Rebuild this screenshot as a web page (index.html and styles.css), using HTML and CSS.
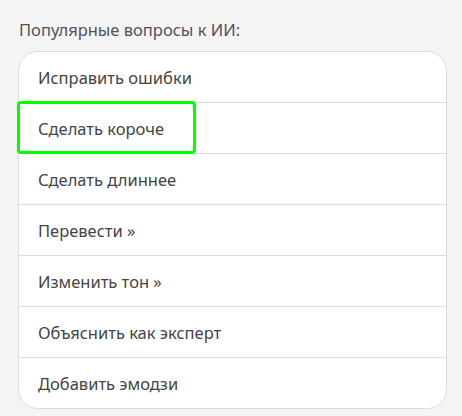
FILE: index.html
```html
<!DOCTYPE html>
<html lang="ru">
<head>
<meta charset="utf-8">
<link rel="stylesheet" href="styles.css">
</head>
<body>
<div class="page">
  <div class="title">Популярные вопросы к ИИ:</div>
  <div class="card">
    <div class="row">Исправить ошибки</div>
    <div class="row">Сделать короче</div>
    <div class="row">Сделать длиннее</div>
    <div class="row">Перевести »</div>
    <div class="row">Изменить тон »</div>
    <div class="row">Объяснить как эксперт</div>
    <div class="row">Добавить эмодзи</div>
  </div>
  <div class="highlight"></div>
</div>
</body>
</html>
```
FILE: styles.css
```css
html, body {
  margin: 0;
  padding: 0;
  background: #f4f4f4;
}
body {
  font-family: "Noto Sans", "Open Sans", sans-serif;
  color: #444;
}
.page {
  position: relative;
  padding: 19px 16px 0 18px;
  width: 429px;
}
.title {
  font-size: 16.5px;
  line-height: 22px;
  color: #52525a;
  padding-left: 1px;
  margin-bottom: 10px;
}
.card {
  background: #fff;
  border: 1px solid #dcdcdc;
  border-radius: 20px;
  overflow: hidden;
}
.row {
  height: 50px;
  display: flex;
  align-items: center;
  padding-left: 19px;
  font-size: 16.5px;
  color: #444;
  border-top: 1px solid #dcdcdc;
}
.row:first-child {
  border-top: none;
}
.highlight {
  position: absolute;
  left: 17px;
  top: 101px;
  width: 173px;
  height: 47px;
  border: 3px solid #00ff00;
  border-radius: 4px;
}
```
